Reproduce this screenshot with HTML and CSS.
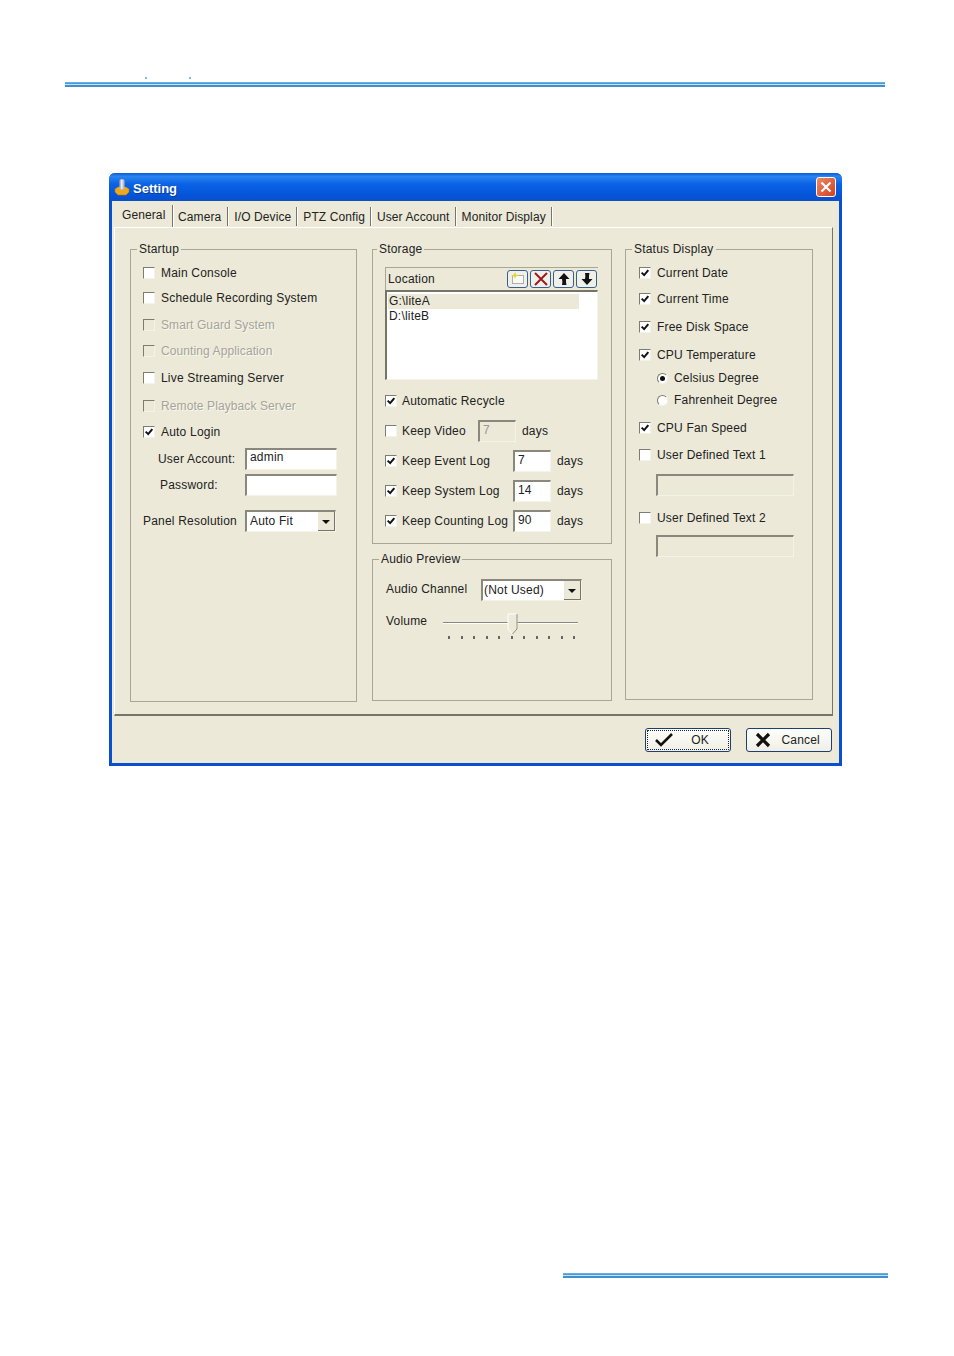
FILE: index.html
```html
<!DOCTYPE html>
<html lang="en">
<head>
    <meta charset="UTF-8">
    <title>Setting</title>
    <link rel="stylesheet" href="styles.css">
</head>
<body>
    <svg class="defs" width="0" height="0">
        <symbol id="tick" viewBox="0 0 12 12"><path d="M2 5.5 L5 8.5 L10 2.5" fill="none" stroke="#111" stroke-width="2.4"/></symbol>
    </svg>

    <div class="specks"><i></i><i></i></div>
    <div class="rule rule-top"></div>

    <div class="dialog">
        <div class="titlebar">
            <svg class="app-icon" width="16" height="18" viewBox="0 0 16 18">
                <path d="M1 11 L4 9 L12 9 L15 11 L15 14 L12 17 L4 17 L1 14 Z" fill="#eda81c" stroke="#b97a10" stroke-width="0.6"/>
                <rect x="5.5" y="1" width="5" height="11" rx="2" fill="#b9bcc4"/>
                <rect x="7" y="2" width="1.6" height="9" fill="#e9ebee"/>
            </svg>
            <span class="title">Setting</span>
            <span class="close">
                <svg width="14" height="14" viewBox="0 0 14 14"><path d="M2.5 2.5 L11.5 11.5 M11.5 2.5 L2.5 11.5" stroke="#fff" stroke-width="2.2"/></svg>
            </span>
        </div>

        <div class="tabs">
            <span class="tab active">General</span>
            <span class="tab tab-camera">Camera</span>
            <span class="tab">I/O Device</span>
            <span class="tab">PTZ Config</span>
            <span class="tab">User Account</span>
            <span class="tab">Monitor Display</span>
        </div>

        <div class="panel">
            <fieldset class="group startup">
                <legend>Startup</legend>
                <div class="rows startup-rows">
                    <label class="row"><span class="check"></span>Main Console</label>
                    <label class="row"><span class="check"></span>Schedule Recording System</label>
                    <label class="row disabled"><span class="check"></span>Smart Guard System</label>
                    <label class="row disabled"><span class="check"></span>Counting Application</label>
                    <label class="row"><span class="check"></span>Live Streaming Server</label>
                    <label class="row disabled"><span class="check"></span>Remote Playback Server</label>
                    <label class="row"><span class="check"><svg><use href="#tick"/></svg></span>Auto Login</label>
                    <div class="row"><span class="label account-label">User Account:</span><span class="field login-field">admin</span></div>
                    <div class="row"><span class="label password-label">Password:</span><span class="field login-field"></span></div>
                    <div class="row"><span class="label panel-label">Panel Resolution</span>
                        <span class="combo panel-combo">Auto Fit<span class="drop"></span></span>
                    </div>
                </div>
            </fieldset>

            <div class="middle">
                <fieldset class="group storage">
                    <legend>Storage</legend>
                    <div class="location-head">
                        <span>Location</span>
                        <div class="tools">
                            <span class="tool"><svg width="18" height="14" viewBox="0 0 18 14"><rect x="3.5" y="3.5" width="11" height="8" fill="#fbfaf2" stroke="#666" stroke-dasharray="1 1"/><path d="M6 0 L7 2.5 L10 3.5 L7 4.5 L6 7 L5 4.5 L2 3.5 L5 2.5 Z" fill="#e6d630"/></svg></span>
                            <span class="tool"><svg width="18" height="16" viewBox="0 0 18 16"><path d="M3 2 L15 14 M15 2 L3 14" stroke="#9c1c1c" stroke-width="2"/></svg></span>
                            <span class="tool"><svg width="16" height="14" viewBox="0 0 16 14"><path d="M8 1 L13.5 7 L10 7 C10 9.5 10 11 10.5 13 L6 13 C6.5 11 6.5 9 6 7 L2.5 7 Z" fill="#111"/></svg></span>
                            <span class="tool"><svg width="16" height="14" viewBox="0 0 16 14"><path d="M8 13 L13.5 7 L10 7 C10 4.5 10 3 10.5 1 L6 1 C6.5 3 6.5 5 6 7 L2.5 7 Z" fill="#111"/></svg></span>
                        </div>
                    </div>
                    <div class="listbox">
                        <div class="item selected">G:\liteA</div>
                        <div class="item">D:\liteB</div>
                    </div>
                    <div class="rows storage-rows">
                        <label class="row"><span class="check"><svg><use href="#tick"/></svg></span>Automatic Recycle</label>
                        <label class="row"><span class="check"></span><span class="keep-name keep-video">Keep Video</span><span class="field days-field off">7</span><span class="days">days</span></label>
                        <label class="row"><span class="check"><svg><use href="#tick"/></svg></span><span class="keep-name">Keep Event Log</span><span class="field days-field">7</span><span class="days">days</span></label>
                        <label class="row"><span class="check"><svg><use href="#tick"/></svg></span><span class="keep-name">Keep System Log</span><span class="field days-field">14</span><span class="days">days</span></label>
                        <label class="row"><span class="check"><svg><use href="#tick"/></svg></span><span class="keep-name">Keep Counting Log</span><span class="field days-field">90</span><span class="days">days</span></label>
                    </div>
                </fieldset>

                <fieldset class="group audio">
                    <legend>Audio Preview</legend>
                    <div class="audio-channel">
                        <span class="audio-label">Audio Channel</span>
                        <span class="combo audio-combo">(Not Used)<span class="drop"></span></span>
                    </div>
                    <div class="audio-volume">
                        <span class="audio-label">Volume</span>
                        <div class="slider">
                            <div class="track"></div>
                            <svg class="thumb" width="11" height="22" viewBox="0 0 11 22"><path d="M1 1 L10 1 L10 16 L5.5 21 L1 16 Z" fill="#ece9d8" stroke="#fff"/><path d="M10 1 L10 16 L5.5 21" fill="none" stroke="#8a8878"/></svg>
                            <div class="ticks"><i></i><i></i><i></i><i></i><i></i><i></i><i></i><i></i><i></i><i></i><i></i></div>
                        </div>
                    </div>
                </fieldset>
            </div>

            <fieldset class="group status">
                <legend>Status Display</legend>
                <div class="rows status-rows">
                    <label class="row"><span class="check"><svg><use href="#tick"/></svg></span>Current Date</label>
                    <label class="row"><span class="check"><svg><use href="#tick"/></svg></span>Current Time</label>
                    <label class="row"><span class="check"><svg><use href="#tick"/></svg></span>Free Disk Space</label>
                    <label class="row"><span class="check"><svg><use href="#tick"/></svg></span>CPU Temperature</label>
                    <label class="row sub"><span class="radio on"></span>Celsius Degree</label>
                    <label class="row sub"><span class="radio"></span>Fahrenheit Degree</label>
                    <label class="row"><span class="check"><svg><use href="#tick"/></svg></span>CPU Fan Speed</label>
                    <label class="row"><span class="check"></span>User Defined Text 1</label>
                    <div class="row sub"><span class="field text-field off"></span></div>
                    <label class="row"><span class="check"></span>User Defined Text 2</label>
                    <div class="row sub"><span class="field text-field off"></span></div>
                </div>
            </fieldset>
        </div>

        <div class="buttons">
            <button class="btn btn-ok">
                <svg width="20" height="16" viewBox="0 0 20 16"><path d="M2 8 L7 13 L18 2" fill="none" stroke="#111" stroke-width="2.6"/></svg>
                <span>OK</span>
            </button>
            <button class="btn btn-cancel">
                <svg width="16" height="16" viewBox="0 0 16 16"><path d="M2 2 L14 14 M14 2 L2 14" stroke="#111" stroke-width="3.2"/></svg>
                <span>Cancel</span>
            </button>
        </div>
    </div>

    <div class="rule rule-bottom"></div>
</body>
</html>
```

FILE: styles.css
```css
body {
    margin: 0;
    height: 1356px;
    overflow: hidden;
    background: #fff;
    font-family: "Liberation Sans", Arial, sans-serif;
    font-size: 12px;
    letter-spacing: 0.2px;
    color: #222;
}

.defs {
    display: block;
}

.specks {
    display: flex;
    gap: 42px;
    height: 2px;
    margin: 77px 0 3px 145px;
}

.specks i {
    width: 2px;
    height: 2px;
    background: #7db6e4;
}

.rule {
    height: 5px;
    background: linear-gradient(#8cc2ea 0, #4a9ad8 20%, #4a9ad8 40%, #c9e3f6 40%, #c9e3f6 60%, #3f8fd0 60%, #3f8fd0 100%);
}

.rule-top {
    width: 820px;
    margin-left: 65px;
}

.rule-bottom {
    width: 325px;
    margin: 507px 0 0 563px;
}

.dialog {
    box-sizing: border-box;
    width: 733px;
    height: 593px;
    margin: 86px 0 0 109px;
    background: #ece9d8;
    border: 3px solid #0a4fd0;
    border-top: 0;
    border-radius: 6px 6px 0 0;
    display: flex;
    flex-direction: column;
}

.titlebar {
    height: 28px;
    margin: 0 -3px;
    padding: 0 6px 0 5px;
    display: flex;
    align-items: center;
    gap: 3px;
    border-radius: 6px 6px 0 0;
    background: linear-gradient(#0a5ad8 0, #2a84f0 12%, #0a62e4 40%, #0554d8 80%, #0a50c8 100%);
}

.title {
    padding-top: 2px;
    color: #fff;
    font-size: 13px;
    font-weight: bold;
    letter-spacing: 0;
    text-shadow: 1px 1px 0 #0a3a9c;
}

.close {
    margin-left: auto;
    width: 20px;
    height: 20px;
    box-sizing: border-box;
    border: 1px solid #fff;
    border-radius: 3px;
    background: linear-gradient(135deg, #e88a68, #d4401c);
    display: flex;
    align-items: center;
    justify-content: center;
}

.tabs {
    height: 26px;
    display: flex;
    align-items: flex-end;
    margin-left: 2px;
    letter-spacing: 0.1px;
}

.tab {
    box-sizing: border-box;
    height: 19px;
    margin-bottom: 1px;
    padding: 0 5px 0 6px;
    line-height: 20px;
    white-space: nowrap;
    border-right: 1px solid #77756a;
    box-shadow: 1px 0 0 #fff;
}

.tab.active {
    height: 22px;
    width: 59px;
    margin-bottom: 0;
    padding-left: 8px;
    line-height: 20px;
    background: #ece9d8;
}

.tab-camera {
    padding: 0 6px 0 5px;
}

.panel {
    box-sizing: border-box;
    width: 719px;
    height: 489px;
    margin-left: 2px;
    padding: 14px 0 0 15px;
    display: flex;
    align-items: flex-start;
    border-top: 1px solid #fff;
    border-left: 1px solid #fff;
    border-right: 1px solid #77756a;
    border-bottom: 2px solid #77756a;
}

.group {
    box-sizing: border-box;
    min-width: 0;
    margin: 0;
    padding: 0 0 0 12px;
    border: 1px solid #a8a797;
}

.group legend {
    padding: 0 2px;
    margin-left: -6px;
    line-height: 14px;
    color: #222;
}

.startup {
    width: 227px;
    height: 460px;
    margin-right: 15px;
    padding-top: 9px;
}

.middle {
    width: 240px;
    margin-right: 13px;
    display: flex;
    flex-direction: column;
    gap: 8px;
}

.storage {
    height: 302px;
    padding-top: 11px;
}

.storage legend {
    margin-left: -8px;
}

.audio {
    height: 149px;
    padding-top: 1px;
}

.status {
    width: 188px;
    height: 458px;
    padding-top: 9px;
    padding-left: 13px;
}

.status legend {
    margin-left: -7px;
}

.rows {
    display: grid;
    align-items: start;
}

.startup-rows {
    grid-template-rows: 25px 27px 26px 27px 28px 26px 27px 26px 36px 16px;
}

.status-rows {
    grid-template-rows: 26px 28px 28px 23px 22px 28px 27px 30px 33px 28px 16px;
}

.storage-rows {
    margin-top: 13px;
    grid-template-rows: 30px 30px 30px 30px 16px;
}

.storage-rows .check {
    margin-right: 5px;
}

.row {
    height: 16px;
    display: flex;
    align-items: center;
    white-space: nowrap;
}

.row.sub {
    padding-left: 18px;
}

.disabled {
    color: #a5a498;
    letter-spacing: 0.1px;
    text-shadow: 1px 1px 0 #f8f7ef;
}

.check {
    flex: none;
    box-sizing: border-box;
    width: 12px;
    height: 12px;
    margin-right: 6px;
    background: #fff;
    border: 1px solid;
    border-color: #7e7c72 #f4f3ea #f4f3ea #7e7c72;
}

.check svg {
    display: block;
    width: 10px;
    height: 10px;
}

.disabled .check {
    background: #ece9d8;
}

.radio {
    flex: none;
    box-sizing: border-box;
    width: 11px;
    height: 11px;
    margin-right: 6px;
    border-radius: 50%;
    background: #fff;
    border: 1px solid;
    border-color: #7e7c72 #f4f3ea #f4f3ea #7e7c72;
    display: flex;
    align-items: center;
    justify-content: center;
}

.radio.on::after {
    content: "";
    width: 5px;
    height: 5px;
    border-radius: 50%;
    background: #111;
}

.label {
    flex: none;
}

.account-label {
    width: 87px;
    padding-left: 15px;
}

.password-label {
    width: 85px;
    padding-left: 17px;
}

.panel-label {
    width: 102px;
}

.field {
    flex: none;
    box-sizing: border-box;
    height: 22px;
    padding-left: 3px;
    line-height: 17px;
    background: #fff;
    border: 1px solid;
    border-color: #8a887c #f4f3ea #f4f3ea #8a887c;
    border-width: 2px 1px 1px 2px;
}

.field.off {
    background: #ece9d8;
    color: #9a998c;
}

.login-field {
    width: 92px;
    line-height: 15px;
}

.combo {
    flex: none;
    box-sizing: border-box;
    position: relative;
    height: 22px;
    padding-left: 3px;
    line-height: 18px;
    background: #fff;
    border: 1px solid;
    border-color: #8a887c #f4f3ea #f4f3ea #8a887c;
    border-width: 2px 1px 1px 2px;
}

.panel-combo {
    width: 91px;
}

.audio-combo {
    width: 101px;
    margin-top: 1px;
    padding-left: 1px;
    line-height: 19px;
}

.drop {
    position: absolute;
    top: 0;
    right: 0;
    width: 16px;
    height: 18px;
    background: #ece9d8;
    border-right: 1px solid #77756a;
    border-bottom: 1px solid #77756a;
}

.drop::after {
    content: "";
    position: absolute;
    left: 4px;
    top: 8px;
    border: 4px solid transparent;
    border-top-color: #111;
    border-bottom: 0;
}

.location-head {
    box-sizing: border-box;
    width: 213px;
    height: 23px;
    padding: 0 1px 0 2px;
    display: flex;
    align-items: center;
    justify-content: space-between;
    border-top: 1px solid #a8a797;
    border-left: 1px solid #a8a797;
}

.tools {
    display: flex;
    gap: 2px;
}

.tool {
    box-sizing: border-box;
    width: 21px;
    height: 18px;
    border: 1px solid #3a5f8a;
    border-radius: 3px;
    background: #f0f0ea;
    display: flex;
    align-items: center;
    justify-content: center;
}

.listbox {
    box-sizing: border-box;
    width: 213px;
    height: 90px;
    padding: 2px 18px 0 1px;
    background: #fff;
    border: 1px solid;
    border-color: #77756a #f4f3ea #f4f3ea #77756a;
    border-width: 2px 1px 1px 2px;
}

.item {
    height: 15px;
    line-height: 15px;
    padding-left: 1px;
}

.item.selected {
    background: #ece9d8;
}

.keep-name {
    width: 111px;
}

.keep-video {
    width: 76px;
}

.days-field {
    width: 38px;
}

.days {
    margin-left: 6px;
}

.text-field {
    width: 138px;
    margin-left: -1px;
}

.audio-channel {
    display: flex;
    align-items: flex-start;
    padding: 11px 0 0 1px;
}

.audio-label {
    width: 95px;
    margin-top: 3px;
    line-height: 16px;
}

.audio-volume {
    display: flex;
    align-items: flex-start;
    padding: 11px 0 0 1px;
}

.audio-volume .audio-label {
    width: 57px;
    margin-top: 1px;
}

.slider {
    position: relative;
    width: 135px;
    height: 30px;
}

.track {
    margin-top: 10px;
    height: 1px;
    background: #8a887c;
    border-bottom: 1px solid #fff;
}

.thumb {
    position: absolute;
    left: 64px;
    top: 1px;
}

.ticks {
    display: flex;
    justify-content: space-between;
    margin: 12px 3px 0 5px;
}

.ticks i {
    width: 2px;
    height: 3px;
    background: #666;
}

.buttons {
    flex: 1;
    display: flex;
    justify-content: flex-end;
    gap: 15px;
    padding: 12px 7px 0 0;
}

.btn {
    box-sizing: border-box;
    width: 86px;
    height: 24px;
    padding: 0 11px 0 8px;
    display: flex;
    align-items: center;
    justify-content: space-between;
    background: linear-gradient(#fdfdfb, #f0efe6);
    border: 1px solid #1f3f6e;
    border-radius: 3px;
    font: inherit;
    letter-spacing: inherit;
    color: #222;
}

.btn-ok {
    outline: 1px dotted #222;
    outline-offset: -3px;
    padding-right: 21px;
}
```
